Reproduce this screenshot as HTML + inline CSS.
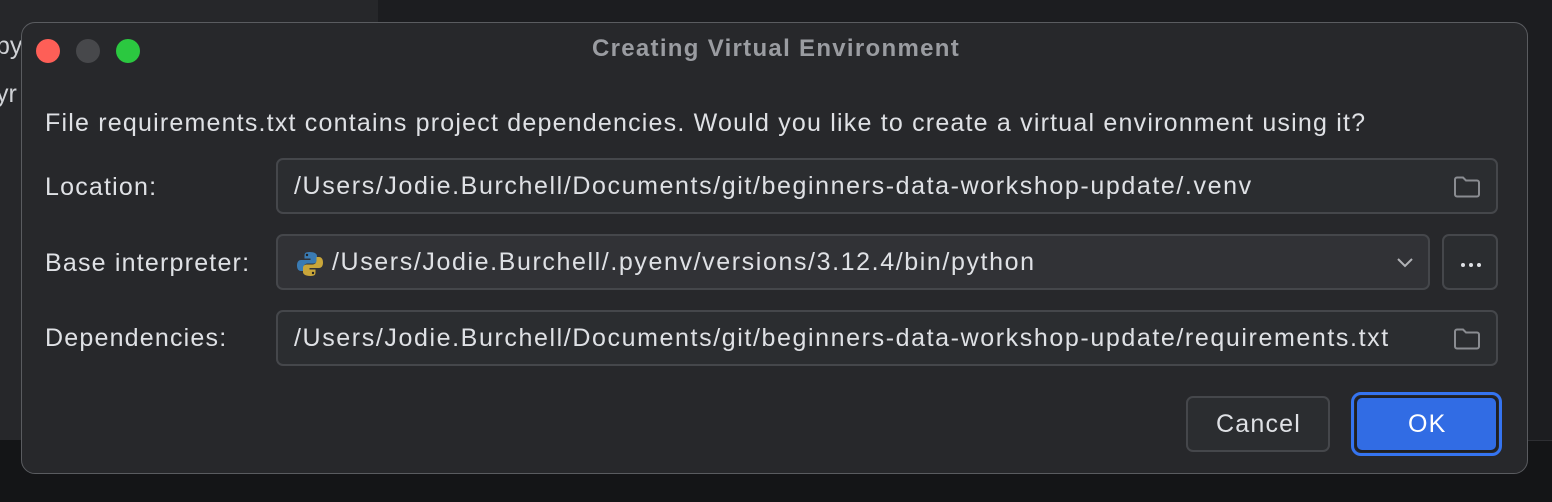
<!DOCTYPE html>
<html><head><meta charset="utf-8"><style>
*{margin:0;padding:0;box-sizing:border-box}
body{width:1552px;height:502px;background:#1c1d20;position:relative;overflow:hidden;font-family:"Liberation Sans",Helvetica,Arial,sans-serif;color:#dfe1e5}
.bgl{position:absolute;left:0;top:0;width:378px;height:502px;background:#26272a}
.bgb{position:absolute;left:0;top:440px;width:1552px;height:62px;background:#141517}
.bgr{position:absolute;left:1527px;top:440px;width:25px;height:2px;border-top:1px solid #2e2f33}
.side{position:absolute;left:-4px;font-size:25px;color:#cfd1d5}
.dlg{position:absolute;left:21px;top:22px;width:1507px;height:452px;background:#27282b;border:1.5px solid #5a5c60;border-radius:14px}
.dot{position:absolute;top:39px;width:24px;height:24px;border-radius:50%}
.title{position:absolute;left:0;width:1552px;top:35px;text-align:center;font-weight:bold;font-size:24px;letter-spacing:1.3px;color:#9a9ca1}
.t{position:absolute;font-size:25px;letter-spacing:1.2px;white-space:nowrap}
.fld{position:absolute;background:#2b2d30;border:2px solid #45474b;border-radius:7px}
.fld .t{top:12px;left:16px;letter-spacing:1.6px}
.fold{position:absolute;right:14px;top:15px}
</style></head><body>
<div class="bgl"></div><div class="bgb"></div><div class="bgr"></div>
<div class="side" style="top:32px">py</div>
<div class="side" style="top:80px">yr</div>
<div class="dlg"></div>
<div class="dot" style="left:36px;background:#fe5f57"></div>
<div class="dot" style="left:76px;background:#47484b"></div>
<div class="dot" style="left:116px;background:#2bc840"></div>
<div class="title">Creating Virtual Environment</div>
<div class="t" style="left:45px;top:109px">File requirements.txt contains project dependencies. Would you like to create a virtual environment using it?</div>
<div class="t" style="left:45px;top:173px">Location:</div>
<div class="t" style="left:45px;top:249px">Base interpreter:</div>
<div class="t" style="left:45px;top:324px">Dependencies:</div>
<div class="fld" style="left:276px;top:158px;width:1222px;height:56px"><div class="t">/Users/Jodie.Burchell/Documents/git/beginners-data-workshop-update/.venv</div>
<svg class="fold" width="30" height="24" viewBox="0 0 30 24"><path d="M3 4.5a2 2 0 0 1 2-2h6l3 3h11a2 2 0 0 1 2 2v12a2 2 0 0 1-2 2H5a2 2 0 0 1-2-2z" fill="none" stroke="#8a8c91" stroke-width="2"/></svg></div>
<div class="fld" style="left:276px;top:234px;width:1154px;height:56px;background:#313236"><div class="t" style="left:54px">/Users/Jodie.Burchell/.pyenv/versions/3.12.4/bin/python</div>
<svg style="position:absolute;left:18px;top:14px" width="28" height="28" viewBox="0 0 28 28"><path d="M13.5 2c-5 0-5 2-5 4v2.5h6V10H5c-2.5 0-4 2-4 5.5S2.5 21 5 21h2.5v-3.5c0-2.5 2-4 4-4h6c2 0 3.5-1.5 3.5-3.5V6c0-2-2-4-7.5-4z" fill="#3a7bb3"/><path d="M14.5 26c5 0 5-2 5-4v-2.5h-6V18H23c2.5 0 4-2 4-5.5S25.5 7 23 7h-2.5v3.5c0 2.5-2 4-4 4h-6c-2 0-3.5 1.5-3.5 3.5v4c0 2 2 4 7.5 4z" fill="#c9a63a"/><circle cx="11" cy="5" r="1.2" fill="#222"/><circle cx="17" cy="23" r="1.2" fill="#222"/></svg>
<svg style="position:absolute;right:14px;top:20px" width="18" height="12" viewBox="0 0 18 12"><path d="M2 3l7 7 7-7" fill="none" stroke="#b0b2b6" stroke-width="2"/></svg></div>
<div class="fld" style="left:1442px;top:234px;width:56px;height:56px;background:#2b2d30">
<svg style="position:absolute;left:15px;top:26px" width="24" height="6"><circle cx="4" cy="3" r="2" fill="#dfe1e5"/><circle cx="12" cy="3" r="2" fill="#dfe1e5"/><circle cx="20" cy="3" r="2" fill="#dfe1e5"/></svg></div>
<div class="fld" style="left:276px;top:310px;width:1222px;height:56px"><div class="t">/Users/Jodie.Burchell/Documents/git/beginners-data-workshop-update/requirements.txt</div>
<svg class="fold" width="30" height="24" viewBox="0 0 30 24"><path d="M3 4.5a2 2 0 0 1 2-2h6l3 3h11a2 2 0 0 1 2 2v12a2 2 0 0 1-2 2H5a2 2 0 0 1-2-2z" fill="none" stroke="#8a8c91" stroke-width="2"/></svg></div>
<div class="fld" style="left:1186px;top:396px;width:144px;height:56px;background:#2b2d30"><div class="t" style="left:28px;top:12px;letter-spacing:1.2px">Cancel</div></div>
<div style="position:absolute;left:1351px;top:392px;width:151px;height:64px;border:3px solid #3574f0;border-radius:10px"></div>
<div style="position:absolute;left:1355px;top:396px;width:143px;height:56px;background:#316ce4;border:2px solid #1f2024;border-radius:7px"><div class="t" style="left:51px;top:12px;color:#fff">OK</div></div>
</body></html>
